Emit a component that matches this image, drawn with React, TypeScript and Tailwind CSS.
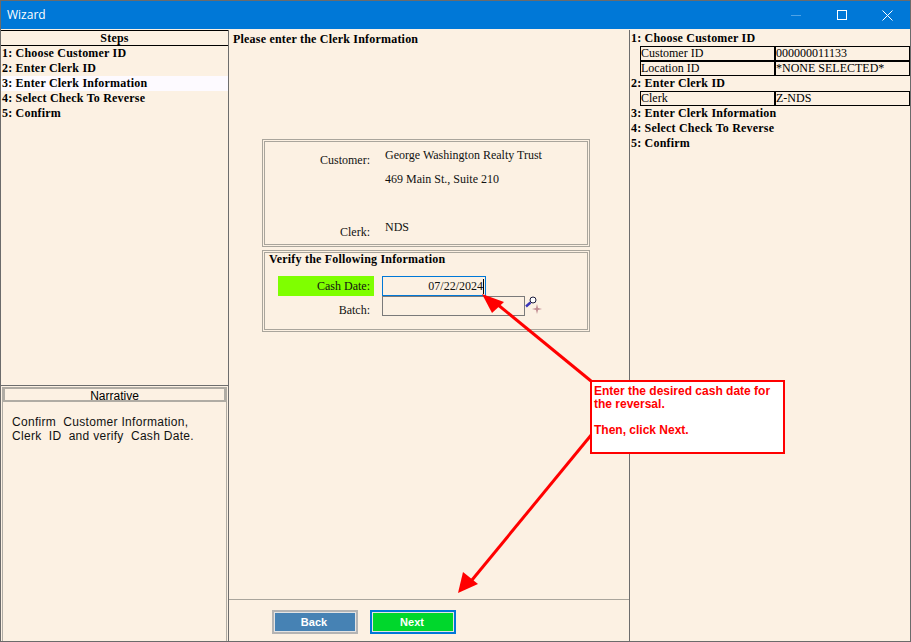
import React from "react";

const serif = "font-['Liberation_Serif',serif]";
const sans = "font-['Liberation_Sans',sans-serif]";

function StepRow({ text, active }: { text: string; active?: boolean }) {
  return (
    <div className={`h-[15px] pl-px text-[12px] leading-[15px] tracking-[0.2px] font-bold text-black whitespace-nowrap ${active ? "bg-[#fdfaff]" : ""}`}>
      {text}
    </div>
  );
}

function TableRow({ a, b }: { a: string; b: string }) {
  return (
    <div className="ml-[10px] grid grid-cols-[135px_135px] h-[15px] text-[12px] leading-[13px] text-black">
      <div className="border border-black overflow-hidden whitespace-nowrap">{a}</div>
      <div className="border border-black overflow-hidden whitespace-nowrap">{b}</div>
    </div>
  );
}

export default function App() {
  return (
    <div className={`relative w-[911px] h-[642px] overflow-hidden flex flex-col bg-[#fcf1e3] border border-[#6b6b6b] ${serif}`}>
      {/* Title bar */}
      <div className="h-[28px] shrink-0 bg-[#0078d7] flex items-center justify-between text-white">
        <span className="pl-[6px] text-[12px] font-['Open_Sans',sans-serif]">Wizard</span>
        <div className="flex items-center h-full">
          <div className="w-[46px] flex justify-center pl-[2px] pr-0"><div className="w-[10px] h-px bg-[#4fa3e6]" /></div>
          <div className="w-[46px] flex justify-center pl-[2px]">
            <svg width="10" height="10" viewBox="0 0 10 10"><rect x="0.5" y="0.5" width="9" height="9" fill="none" stroke="#fff" /></svg>
          </div>
          <div className="w-[46px] flex justify-center">
            <svg width="11" height="11" viewBox="0 0 11 11"><path d="M0.5 0.5L10.5 10.5M10.5 0.5L0.5 10.5" stroke="#fff" /></svg>
          </div>
        </div>
      </div>

      <div className="flex-1 flex min-h-0 pt-px">
        {/* Left column */}
        <div className="w-[228px] shrink-0 flex flex-col border-r border-[#6d6d6d]">
          <div className="h-[355px] shrink-0 border-t border-black">
            <div className="h-[15px] border-b border-black text-center text-[12px] leading-[14px] tracking-[0.2px] font-bold text-black">Steps</div>
            <StepRow text="1: Choose Customer ID" />
            <StepRow text="2: Enter Clerk ID" />
            <StepRow text="3: Enter Clerk Information" active />
            <StepRow text="4: Select Check To Reverse" />
            <StepRow text="5: Confirm" />
          </div>
          <div className="flex-1 border-t border-[#6d6d6d] pt-px">
            <div className="h-full border-l border-r border-[#b0aca4] mx-px">
              <div className={`h-[15px] border-2 border-[#b0aca4] text-center text-[12px] leading-[15px] text-black ${sans}`}>Narrative</div>
              <div className={`pl-[9px] pt-[13px] text-[12px] leading-[14px] tracking-[0.3px] text-[#111] whitespace-pre ${sans}`}>
                {"Confirm  Customer Information,\nClerk  ID  and verify  Cash Date."}
              </div>
            </div>
          </div>
        </div>

        {/* Centre column */}
        <div className="w-[401px] shrink-0 flex flex-col border-r border-[#6d6d6d]">
          <div className="flex-1 pl-[4px] pt-[2px] min-h-0">
            <div className="h-[15px] text-[12px] leading-[15px] tracking-[0.2px] font-bold text-black whitespace-nowrap">Please enter the Clerk Information</div>
            <div className="ml-[29px] mt-[92px] w-[328px] flex flex-col gap-[3px]">
              <div className="h-[108px] border-[3px] border-double border-[#a9a59c] grid grid-cols-[105px_1fr] gap-[15px] text-[12px] leading-[14px] text-[#111]">
                <div className="flex flex-col justify-between items-end pt-[11px] pb-[5px]">
                  <span>Customer:</span>
                  <span>Clerk:</span>
                </div>
                <div className="flex flex-col pt-[6px]">
                  <span>George Washington Realty Trust</span>
                  <span className="mt-[10px]">469 Main St., Suite 210</span>
                  <span className="mt-[34px]">NDS</span>
                </div>
              </div>
              <div className="h-[82px] border-[3px] border-double border-[#a9a59c] text-[12px] text-[#111]">
                <div className="pl-[4px] h-[23px] leading-[13px] tracking-[0.2px] font-bold text-black">Verify the Following Information</div>
                <div className="flex h-[20px] pl-[13px]">
                  <div className="w-[96px] bg-[#7fff00] text-right pr-[4px] leading-[20px]">Cash Date:</div>
                  <div className="ml-[8px] w-[104px] border border-[#0078d7] text-right pr-[2px] leading-[19px] relative">
                    07/22/2024
                    <span className="absolute right-[1px] top-[2px] w-px h-[15px] bg-black" />
                  </div>
                </div>
                <div className="flex h-[20px] pl-[13px]">
                  <div className="w-[92px] text-right leading-[28px]">Batch:</div>
                  <div className="ml-[12px] w-[143px] border border-[#7a7a7a]" />
                  <svg width="18" height="22" viewBox="0 0 18 22" className="-mt-[1px]">
                    <circle cx="8" cy="5" r="3" fill="#fff" stroke="#1c1c3c" strokeWidth="1" />
                    <path d="M5.5 7.5L1 11.5" stroke="#3a36b8" strokeWidth="2.4" />
                    <path d="M12 9L13 13L17 14L13 15L12 19L11 15L7 14L11 13Z" fill="#c08a90" />
                  </svg>
                </div>
              </div>
            </div>
          </div>
          <div className="h-[42px] shrink-0 border-t border-[#a9a59c] flex items-start pt-[10px] pl-[43px] gap-[12px]">
            <button className={`w-[86px] h-[24px] border-2 border-[#b4b4b4] p-px bg-[#e4e4e4] ${sans}`}>
              <span className="flex items-center justify-center w-full h-full bg-[#4682b4] text-white text-[11px] font-bold pr-[2px]">Back</span>
            </button>
            <button className={`w-[86px] h-[24px] border-2 border-[#0078d7] p-px bg-[#e4e4e4] ${sans}`}>
              <span className="flex items-center justify-center w-full h-full bg-[#00d72c] text-white text-[11px] font-bold pr-[2px]">Next</span>
            </button>
          </div>
        </div>

        {/* Right column */}
        <div className="flex-1 pt-[1px]">
          <StepRow text="1: Choose Customer ID" />
          <TableRow a="Customer ID" b="000000011133" />
          <TableRow a="Location ID" b="*NONE SELECTED*" />
          <StepRow text="2: Enter Clerk ID" />
          <TableRow a="Clerk" b="Z-NDS" />
          <StepRow text="3: Enter Clerk Information" />
          <StepRow text="4: Select Check To Reverse" />
          <StepRow text="5: Confirm" />
        </div>
      </div>

      {/* Annotation overlay */}
      <svg className="absolute left-[-1px] top-[-1px] pointer-events-none" width="911" height="642" viewBox="0 0 911 642">
        <path d="M591 381L497 304" stroke="#ff0000" strokeWidth="3" />
        <polygon points="482,294 504,302 492,313" fill="#ff0000" />
        <path d="M592 434L472 580" stroke="#ff0000" strokeWidth="3" />
        <polygon points="458,593 463,572 478,584" fill="#ff0000" />
      </svg>
      <div className={`absolute left-[589px] top-[379px] w-[195px] h-[74px] bg-white border-2 border-[#ff0000] pl-[2px] pt-[3px] text-[12px] leading-[13px] font-bold text-[#ff0000] whitespace-pre ${sans}`}>
        {"Enter the desired cash date for\nthe reversal.\n\nThen, click Next."}
      </div>
    </div>
  );
}
